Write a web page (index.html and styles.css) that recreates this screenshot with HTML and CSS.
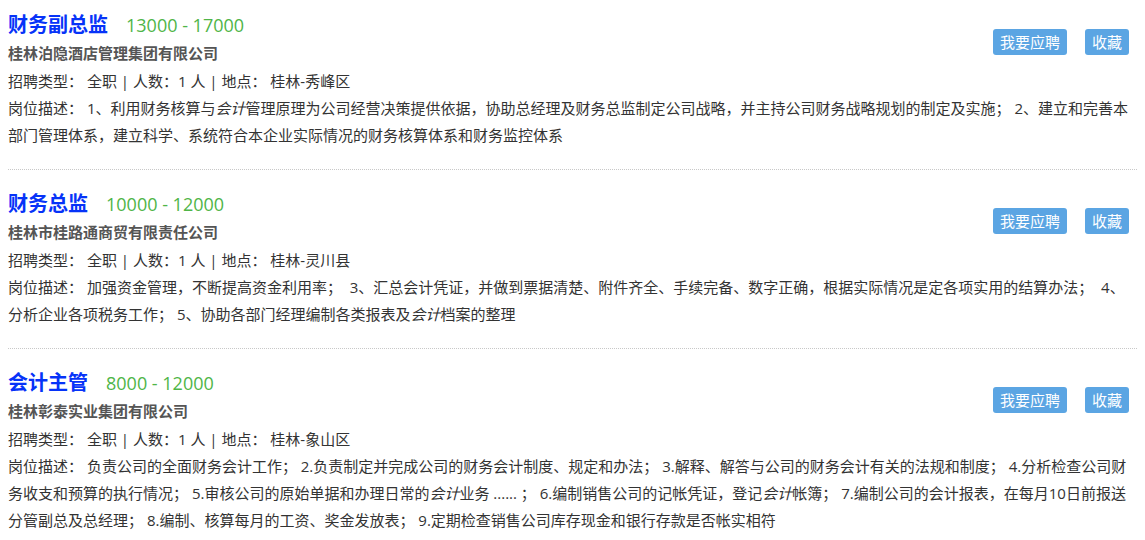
FILE: index.html
```html
<!DOCTYPE html>
<html lang="zh-CN">
<head>
<meta charset="utf-8">
<title>职位列表</title>
<link rel="stylesheet" href="styles.css">
</head>
<body>
<div class="job-list">
  <div class="job-item">
    <div class="job-actions">
      <button class="btn">我要应聘</button>
      <button class="btn">收藏</button>
    </div>
    <div class="job-head">
      <a class="job-title">财务副总监</a>
      <span class="job-salary">13000 - 17000</span>
    </div>
    <div class="job-company">桂林泊隐酒店管理集团有限公司</div>
    <div class="job-info">招聘类型： 全职 | 人数：1 人 | 地点： 桂林-秀峰区</div>
    <div class="job-desc">岗位描述： 1、利用财务核算与<em class="kw">会计</em>管理原理为公司经营决策提供依据，协助总经理及财务总监制定公司战略，并主持公司财务战略规划的制定及实施； 2、建立和完善本部门管理体系，建立科学、系统符合本企业实际情况的财务核算体系和财务监控体系</div>
  </div>

  <div class="job-item">
    <div class="job-actions">
      <button class="btn">我要应聘</button>
      <button class="btn">收藏</button>
    </div>
    <div class="job-head">
      <a class="job-title">财务总监</a>
      <span class="job-salary">10000 - 12000</span>
    </div>
    <div class="job-company">桂林市桂路通商贸有限责任公司</div>
    <div class="job-info">招聘类型： 全职 | 人数：1 人 | 地点： 桂林-灵川县</div>
    <div class="job-desc">岗位描述： 加强资金管理，不断提高资金利用率；&nbsp; 3、汇总会计凭证，并做到票据清楚、附件齐全、手续完备、数字正确，根据实际情况是定各项实用的结算办法；&nbsp; 4、分析企业各项税务工作； 5、协助各部门经理编制各类报表及<em class="kw">会计</em>档案的整理</div>
  </div>

  <div class="job-item">
    <div class="job-actions">
      <button class="btn">我要应聘</button>
      <button class="btn">收藏</button>
    </div>
    <div class="job-head">
      <a class="job-title">会计主管</a>
      <span class="job-salary">8000 - 12000</span>
    </div>
    <div class="job-company">桂林彰泰实业集团有限公司</div>
    <div class="job-info">招聘类型： 全职 | 人数：1 人 | 地点： 桂林-象山区</div>
    <div class="job-desc">岗位描述： 负责公司的全面财务会计工作； 2.负责制定并完成公司的财务会计制度、规定和办法； 3.解释、解答与公司的财务会计有关的法规和制度； 4.分析检查公司财务收支和预算的执行情况； 5.审核公司的原始单据和办理日常的<em class="kw">会计</em>业务 ...... ； 6.编制销售公司的记帐凭证，登记<em class="kw">会计</em>帐簿； 7.编制公司的会计报表，在每月10日前报送分管副总及总经理； 8.编制、核算每月的工资、奖金发放表； 9.定期检查销售公司库存现金和银行存款是否帐实相符</div>
  </div>
</div>
</body>
</html>
```

FILE: styles.css
```css
html, body {
  margin: 0;
  padding: 0;
  background: #fff;
}
body {
  font-family: "Open Sans", "Noto Sans CJK SC", sans-serif;
  font-size: 15px;
  color: #333;
}
.job-list {
  padding: 0 8px;
}
.job-item {
  padding: 20px 0 20px;
  border-top: 1px dotted #c8c8c8;
}
.job-item::after {
  content: "";
  display: block;
  clear: both;
}
.job-item:first-child {
  border-top: none;
  padding-top: 11px;
}
.job-item:last-child {
  padding-bottom: 0;
}
.job-head {
  display: flex;
  align-items: baseline;
  gap: 18px;
  line-height: 28px;
  height: 28px;
}
.job-title {
  font-size: 20px;
  font-weight: bold;
  color: #0633f8;
  text-decoration: none;
}
.job-salary {
  font-size: 18px;
  color: #4fb548;
}
.job-company {
  font-weight: bold;
  color: #555;
  line-height: 28px;
}
.job-info {
  line-height: 28px;
  color: #333;
}
.job-desc {
  line-height: 27px;
  color: #333;
}
.kw {
  font-style: italic;
}
.job-actions {
  float: right;
  display: flex;
  gap: 18px;
  margin-top: 18px;
  margin-right: 8px;
}
.btn {
  font-family: inherit;
  font-size: 15px;
  color: #fff;
  background: #5ba5e3;
  border: none;
  border-radius: 3px;
  height: 26px;
  line-height: 26px;
  padding: 0 7px;
}
```
